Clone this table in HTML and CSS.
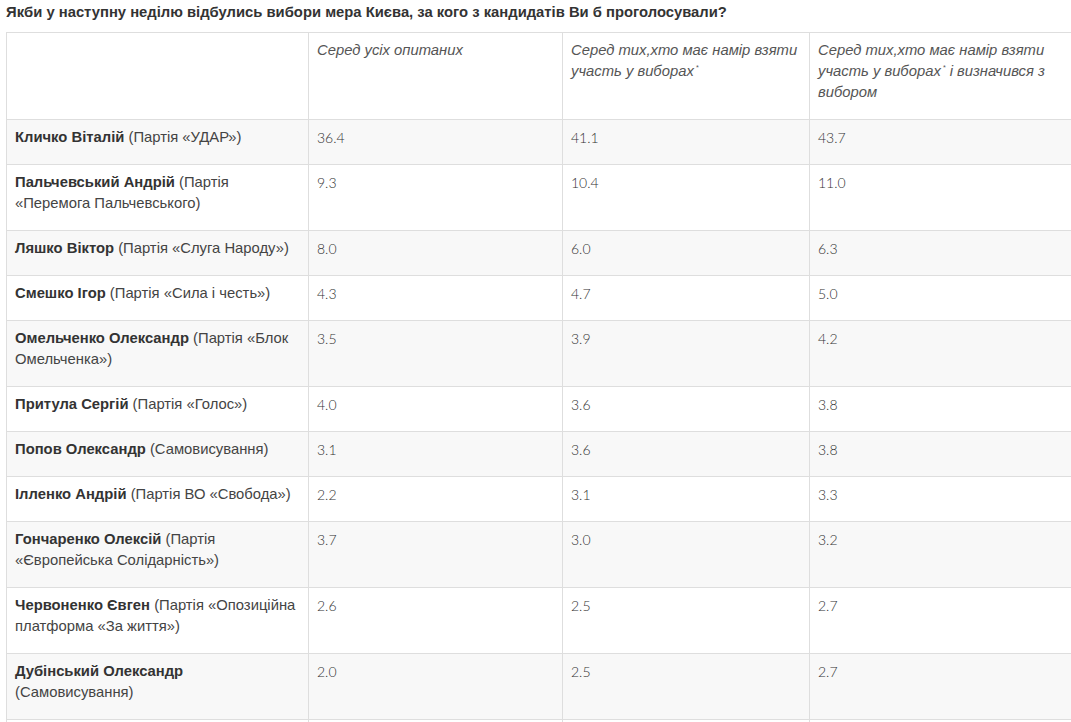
FILE: index.html
```html
<!DOCTYPE html>
<html lang="uk">
<head>
<meta charset="utf-8">
<link rel="stylesheet" href="styles.css">
</head>
<body>
<div class="page">
  <h2 class="title">Якби у наступну неділю відбулись вибори мера Києва, за кого з кандидатів Ви б проголосували?</h2>
  <div class="wrap">
    <table class="poll">
      <colgroup>
        <col class="c1"><col class="c2"><col class="c3"><col class="c4">
      </colgroup>
      <thead>
        <tr>
          <th></th>
          <th>Серед усіх опитаних</th>
          <th>Серед тих,хто має намір взяти участь у виборах<span class="ast">*</span></th>
          <th>Серед тих,хто має намір взяти участь у виборах<span class="ast">*</span> і визначився з вибором</th>
        </tr>
      </thead>
      <tbody>
        <tr><td class="name"><b>Кличко Віталій</b> (Партія «УДАР»)</td><td class="num">36.4</td><td class="num">41.1</td><td class="num">43.7</td></tr>
        <tr><td class="name"><b>Пальчевський Андрій</b> (Партія «Перемога Пальчевського)</td><td class="num">9.3</td><td class="num">10.4</td><td class="num">11.0</td></tr>
        <tr><td class="name"><b>Ляшко Віктор</b> (Партія «Слуга Народу»)</td><td class="num">8.0</td><td class="num">6.0</td><td class="num">6.3</td></tr>
        <tr><td class="name"><b>Смешко Ігор</b> (Партія «Сила і честь»)</td><td class="num">4.3</td><td class="num">4.7</td><td class="num">5.0</td></tr>
        <tr><td class="name"><b>Омельченко Олександр</b> (Партія «Блок Омельченка»)</td><td class="num">3.5</td><td class="num">3.9</td><td class="num">4.2</td></tr>
        <tr><td class="name"><b>Притула Сергій</b> (Партія «Голос»)</td><td class="num">4.0</td><td class="num">3.6</td><td class="num">3.8</td></tr>
        <tr><td class="name"><b>Попов Олександр</b> (Самовисування)</td><td class="num">3.1</td><td class="num">3.6</td><td class="num">3.8</td></tr>
        <tr><td class="name"><b>Ілленко Андрій</b> (Партія ВО «Свобода»)</td><td class="num">2.2</td><td class="num">3.1</td><td class="num">3.3</td></tr>
        <tr><td class="name"><b>Гончаренко Олексій</b> (Партія «Європейська Солідарність»)</td><td class="num">3.7</td><td class="num">3.0</td><td class="num">3.2</td></tr>
        <tr><td class="name"><b>Червоненко Євген</b> (Партія «Опозиційна платформа «За життя»)</td><td class="num">2.6</td><td class="num">2.5</td><td class="num">2.7</td></tr>
        <tr><td class="name"><b>Дубінський Олександр</b> (Самовисування)</td><td class="num">2.0</td><td class="num">2.5</td><td class="num">2.7</td></tr>
        <tr><td class="name">&nbsp;</td><td class="num"></td><td class="num"></td><td class="num"></td></tr>
      </tbody>
    </table>
  </div>
</div>
</body>
</html>
```
FILE: styles.css
```css
html, body {
  margin: 0;
  padding: 0;
  overflow: hidden;
  background: #fff;
}
.page {
  padding: 0 0 0 6px;
  font-family: "Liberation Sans", Arial, sans-serif;
  color: #333;
}
.title {
  margin: 0;
  padding-top: 3px;
  height: 29px;
  font-size: 14.8px;
  line-height: 18px;
  font-weight: bold;
  color: #333;
}
.wrap {
  width: 1070px;
}
.poll {
  border-collapse: collapse;
  table-layout: fixed;
  width: 1068px;
  font-size: 14.8px;
  line-height: 21px;
}
.c1 { width: 302px; }
.c2 { width: 254px; }
.c3 { width: 247px; }
.c4 { width: 265px; }
.poll th, .poll td {
  border: 1px solid #dedede;
  padding: 7px 8px 16px 8px;
  vertical-align: top;
  text-align: left;
}
.poll th {
  font-weight: normal;
  font-style: italic;
  color: #555;
  background: #fff;
}
.ast {
  font-size: 7px;
  line-height: 0;
  position: relative;
  top: -6px;
  margin-left: 2px;
}
.poll tbody tr:nth-child(odd) td {
  background: #f8f8f8;
}
.poll tbody tr:nth-child(even) td {
  background: #fff;
}
.name {
  color: #444;
}
.name b {
  color: #333;
}
.num {
  font-family: Lato, "Open Sans", sans-serif;
  font-weight: 300;
  font-size: 14px;
  color: #333;
  padding-left: 9px;
}
```
